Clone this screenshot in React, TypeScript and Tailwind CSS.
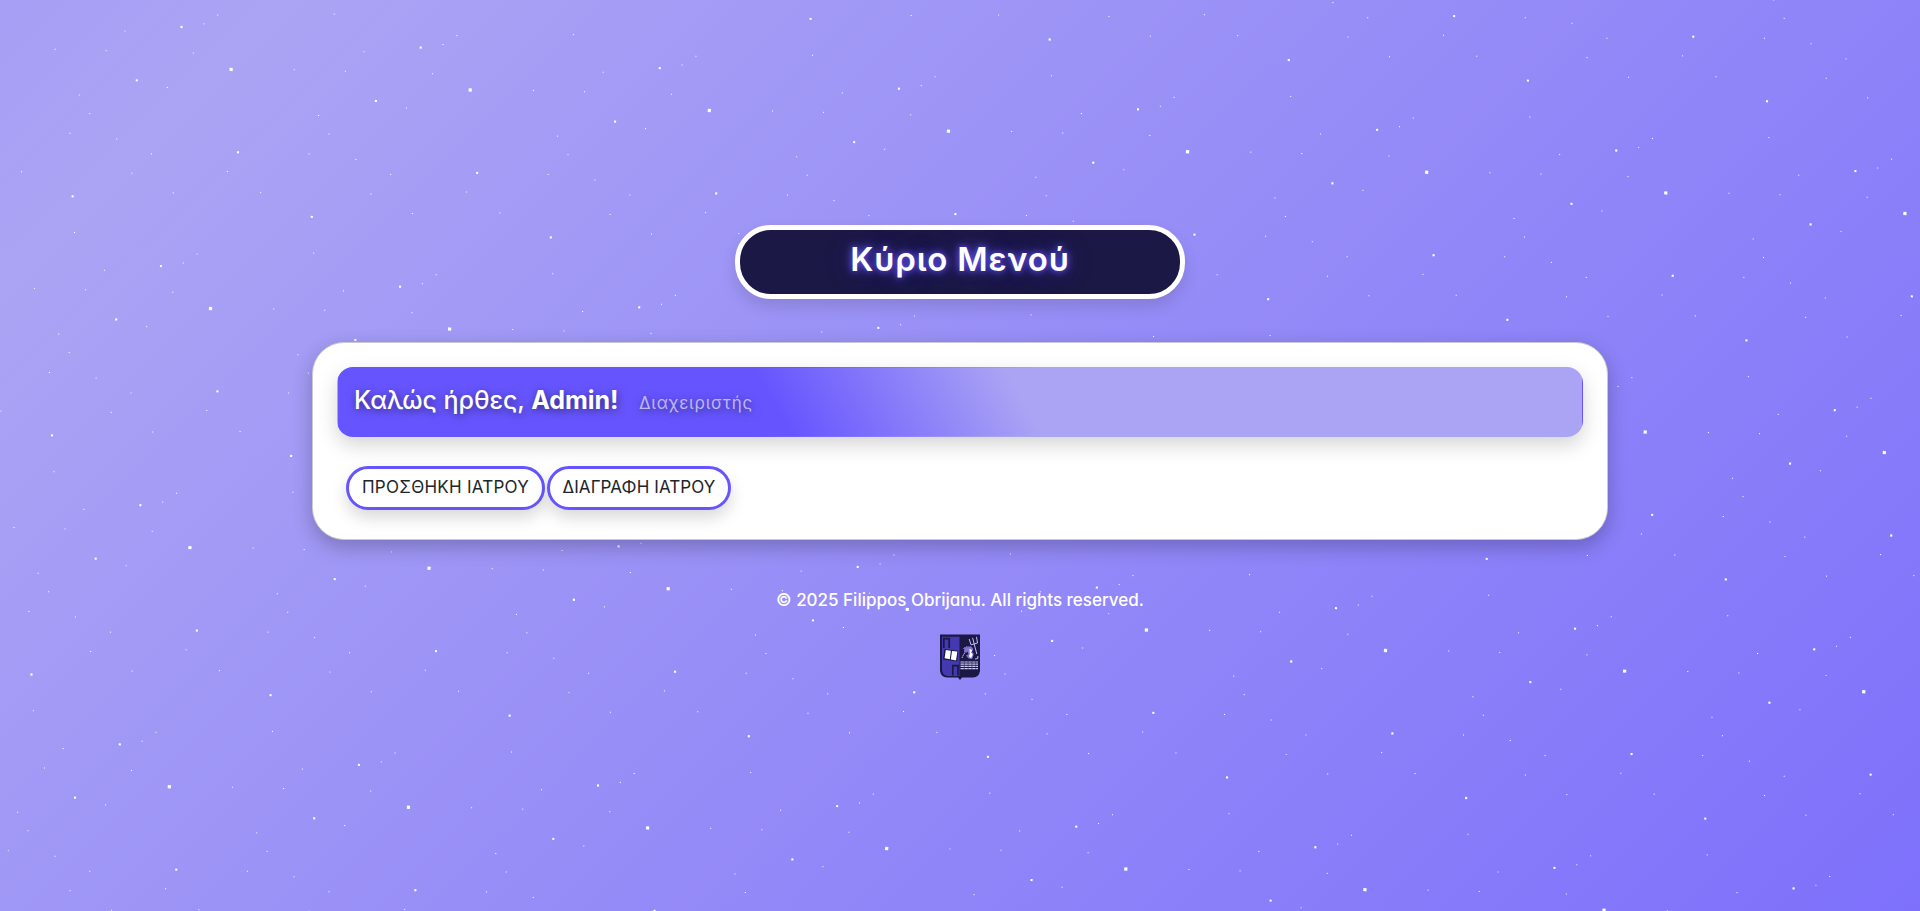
const SPACING = 240;

// Offsets of every star inside one repeating cell: [x, y, size]
const CELL: [number, number, number][] = [
  [0, 0, 3.2],
  [-93, 19, 2.1], [-53, -38, 2.1], [14, 82, 2.1], [-147, 140, 2.1],
  [-18, -53, 1], [-31, -43, 1], [-39, -13, 1], [-109, -29, 1],
  [-126, -8, 1], [-177, -5, 1], [-149, 38.5, 1], [-62, 23.5, 1],
  [-137, 56, 1], [-155, 77.5, 1], [-108, 79, 1], [-72, 91, 1],
  [-90, 112, 1], [-47, 128, 1], [-200, 120, 1], [5, 102, 1],
  [-142, 176, 1],
];

const ROWS = [-2, -1, 0, 1, 2, 3, 4];
const COLS = [-1, 0, 1, 2, 3, 4, 5, 6, 7, 8];

function Starfield() {
  return (
    <svg className="absolute inset-0 h-full w-full" aria-hidden="true">
      <g transform="translate(231.1 69.4) rotate(4.92)" fill="#fff">
        {ROWS.map((r) =>
          COLS.map((c) =>
            CELL.map(([x, y, size], i) => (
              <rect
                key={`${r}-${c}-${i}`}
                x={x + c * SPACING - size / 2}
                y={y + r * SPACING - size / 2}
                width={size}
                height={size}
              />
            )),
          ),
        )}
      </g>
    </svg>
  );
}

function Crest() {
  return (
    <svg className="mt-[21px] h-[46px] w-10" viewBox="0 0 40 46">
      <path d="M0 0.5H40V37Q39 43 33 43.6H22L20 46L18 43.6H7Q1 43 0 37Z" fill="#1b1845" />
      <path d="M2 2.8H19.5V42H8Q2.4 41.5 2 36Z" fill="#4539b0" />
      <path d="M3.8 14V4.6H9.2V14M12.8 41.5V31.6H18V41.5" fill="none" stroke="#1b1845" strokeWidth="1.7" />
      <path d="M4.4 15L18.2 16.8L17.2 27.6L3 25.4Z" fill="#1b1845" />
      <path d="M5.8 16L10.9 16.8L9.8 25.2L4.6 24.2ZM12 17L17.4 17.6L16 26.4L10.8 25.4Z" fill="#fff" />
      <g fill="none" stroke="#c3bef8" strokeWidth="1">
        <path d="M29.2 5L31 10.8L37.5 9L36.5 2.8M32.6 3.8L36.8 20M37.8 22V24.5L35 25" />
        <path d="M22 24L24 19.5L26.5 18M23.5 14.5L27 12.7L31.2 14" strokeDasharray="1.6 0.7" />
      </g>
      <path d="M24.5 13.8L31 12.2L33.4 15L32 17.5L33.8 20L32.2 25L28.5 24.6L26 21.6L28.6 20.2L27.6 17.8L24 18.3Z" fill="#7d74d8" />
      <path d="M29.4 14.8L32.4 16.2L31 18.6L32.8 20.5L31 24.2L28.9 22.2L29.8 20Z" fill="#fff" />
      <path d="M20.5 28H38M20.5 30.2H38M20.5 32.4H38M20.5 34.6H38" stroke="#cfcbf7" strokeWidth="1.2" strokeDasharray="3.4 0.5" />
    </svg>
  );
}

function MenuButton({ label, className }: { label: string; className: string }) {
  return (
    <button
      className={`flex h-11 items-center justify-center whitespace-nowrap rounded-[22px] border-[3px] border-[#6655ff] bg-white pb-px text-[17px] text-[#212529] shadow-[0_8px_16px_rgba(0,0,0,0.15)] ${className}`}
    >
      {label}
    </button>
  );
}

export default function App() {
  return (
    <div className="relative h-[911px] w-full overflow-hidden bg-[linear-gradient(135deg,#6655ff_-2464px,#aba4f4_200px,#6655ff_2960px)] font-['Inter','Noto_Sans',sans-serif] [font-feature-settings:'cv11']">
      <Starfield />
      <main className="relative flex flex-col items-center pt-[225px]">
        <h1 className="flex h-[74px] w-[450px] items-center justify-center rounded-[36px] border-[5px] border-white bg-[#1b1845] pb-1 text-[33px] font-semibold tracking-[0.8px] text-white shadow-[0_8px_16px_rgba(0,0,0,0.12)] [text-shadow:0_0_6px_rgba(102,85,255,0.9),0_0_12px_rgba(102,85,255,0.7),0_0_30px_rgba(102,85,255,0.25)]">
          Κύριο Μενού
        </h1>

        <section className="mt-[43px] h-[198px] w-[1296px] rounded-[32px] border border-[#c9c9cf] bg-white p-6 shadow-[0_7px_20px_rgba(0,0,0,0.24)]">
          <div className="flex h-[70px] items-baseline rounded-2xl border border-transparent bg-[linear-gradient(60deg,#6655ff_35.5%,#aba4f4_55%)] pl-4 pt-[13px] text-white shadow-[0_8px_20px_rgba(0,0,0,0.17)] [text-shadow:1px_2px_9px_rgba(0,0,0,0.55)]">
            <p className="w-[285px] whitespace-nowrap text-[25px] font-medium leading-[39px] tracking-[-0.05px]">
              Καλώς ήρθες, <strong className="font-bold">Admin!</strong>
            </p>
            <span className="whitespace-nowrap text-[17px] tracking-[0.75px] text-[#bdb6f9]">Διαχειριστής</span>
          </div>

          <div className="mt-[29px] flex gap-0.5 pl-[9px]">
            <MenuButton label="ΠΡΟΣΘΗΚΗ ΙΑΤΡΟΥ" className="w-[199px] tracking-[0.25px]" />
            <MenuButton label="ΔΙΑΓΡΑΦΗ ΙΑΤΡΟΥ" className="w-[184px] tracking-[0.1px]" />
          </div>
        </section>

        <footer className="mt-12 flex flex-col items-center text-white">
          <p className="whitespace-nowrap text-[17px] font-medium leading-[25px]">
            © 2025 Filippos Obrijanu. All rights reserved.
          </p>
          <Crest />
        </footer>
      </main>
    </div>
  );
}
